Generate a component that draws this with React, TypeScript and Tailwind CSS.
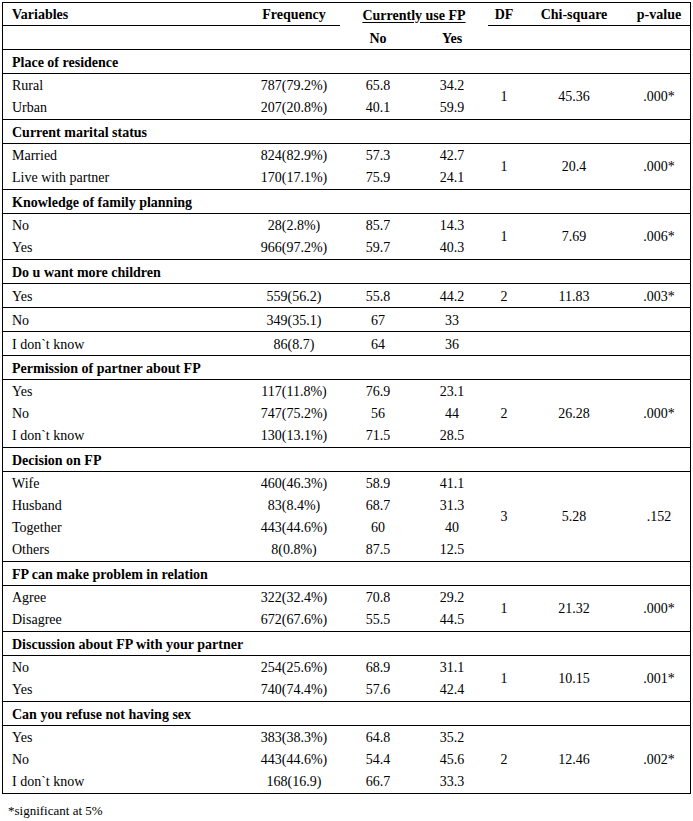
import React from "react";

type Section = {
  title: string;
  rows: [string, string, string, string][];
  stats: [string, string, string];
  split?: boolean;
};

const sections: Section[] = [
  {
    title: "Place of residence",
    rows: [
      ["Rural", "787(79.2%)", "65.8", "34.2"],
      ["Urban", "207(20.8%)", "40.1", "59.9"],
    ],
    stats: ["1", "45.36", ".000*"],
  },
  {
    title: "Current marital status",
    rows: [
      ["Married", "824(82.9%)", "57.3", "42.7"],
      ["Live with partner", "170(17.1%)", "75.9", "24.1"],
    ],
    stats: ["1", "20.4", ".000*"],
  },
  {
    title: "Knowledge of family planning",
    rows: [
      ["No", "28(2.8%)", "85.7", "14.3"],
      ["Yes", "966(97.2%)", "59.7", "40.3"],
    ],
    stats: ["1", "7.69", ".006*"],
  },
  {
    title: "Do u want more children",
    rows: [
      ["Yes", "559(56.2)", "55.8", "44.2"],
      ["No", "349(35.1)", "67", "33"],
      ["I don`t know", "86(8.7)", "64", "36"],
    ],
    stats: ["2", "11.83", ".003*"],
    split: true,
  },
  {
    title: "Permission of partner about FP",
    rows: [
      ["Yes", "117(11.8%)", "76.9", "23.1"],
      ["No", "747(75.2%)", "56", "44"],
      ["I don`t know", "130(13.1%)", "71.5", "28.5"],
    ],
    stats: ["2", "26.28", ".000*"],
  },
  {
    title: "Decision on FP",
    rows: [
      ["Wife", "460(46.3%)", "58.9", "41.1"],
      ["Husband", "83(8.4%)", "68.7", "31.3"],
      ["Together", "443(44.6%)", "60", "40"],
      ["Others", "8(0.8%)", "87.5", "12.5"],
    ],
    stats: ["3", "5.28", ".152"],
  },
  {
    title: "FP can make problem in relation",
    rows: [
      ["Agree", "322(32.4%)", "70.8", "29.2"],
      ["Disagree", "672(67.6%)", "55.5", "44.5"],
    ],
    stats: ["1", "21.32", ".000*"],
  },
  {
    title: "Discussion about FP with your partner",
    rows: [
      ["No", "254(25.6%)", "68.9", "31.1"],
      ["Yes", "740(74.4%)", "57.6", "42.4"],
    ],
    stats: ["1", "10.15", ".001*"],
  },
  {
    title: "Can you refuse not having sex",
    rows: [
      ["Yes", "383(38.3%)", "64.8", "35.2"],
      ["No", "443(44.6%)", "54.4", "45.6"],
      ["I don`t know", "168(16.9)", "66.7", "33.3"],
    ],
    stats: ["2", "12.46", ".002*"],
  },
];

function DataCells({ row }: { row: [string, string, string, string] }) {
  return (
    <>
      <div className="pl-[9px]">{row[0]}</div>
      <div className="text-center">{row[1]}</div>
      <div className="text-center">{row[2]}</div>
      <div className="text-center">{row[3]}</div>
    </>
  );
}

function Stats({ stats }: { stats: [string, string, string] }) {
  return (
    <div className="grid flex-1 grid-cols-[32px_108px_62px] items-center pt-[2px] text-center">
      <div>{stats[0]}</div>
      <div>{stats[1]}</div>
      <div>{stats[2]}</div>
    </div>
  );
}

function SectionBlock({ s }: { s: Section }) {
  return (
    <>
      <div className="flex h-[24px] items-center border-t border-black pl-[9px] pt-[2px] font-bold">
        {s.title}
      </div>
      {s.split ? (
        s.rows.map((r, i) => (
          <div key={i} className="flex h-[24px] items-center border-t border-black pt-[2px]">
            <div className="grid w-[485px] grid-cols-[245px_92px_76px_72px] items-center">
              <DataCells row={r} />
            </div>
            {i === 0 ? (
              <div className="grid flex-1 grid-cols-[32px_108px_62px] items-center text-center">
                <div>{s.stats[0]}</div>
                <div>{s.stats[1]}</div>
                <div>{s.stats[2]}</div>
              </div>
            ) : null}
          </div>
        ))
      ) : (
        <div className="flex border-t border-black pb-[1px]">
          <div className="flex w-[485px] flex-col">
            {s.rows.map((r, i) => (
              <div key={i} className="grid h-[22px] grid-cols-[245px_92px_76px_72px] items-center pt-[2px]">
                <DataCells row={r} />
              </div>
            ))}
          </div>
          <Stats stats={s.stats} />
        </div>
      )}
    </>
  );
}

export default function App() {
  return (
    <div className="min-h-[821px] w-[693px] bg-white pt-[2px] font-['Liberation_Serif','Times_New_Roman',serif] text-[14px] leading-[16px] text-black">
      <div className="ml-[2px] w-[689px] border border-black">
        <div className="grid h-[23px] grid-cols-[245px_92px_148px_32px_108px_62px] font-bold">
          <div className="flex items-center border-b border-black pl-[9px] pt-[2px]">Variables</div>
          <div className="flex items-center justify-center border-b border-black pt-[2px]">Frequency</div>
          <div className="flex items-center justify-center pt-[2px]">
            <span className="underline underline-offset-2">Currently use FP</span>
          </div>
          <div className="flex items-center justify-center border-b border-black pt-[2px]">DF</div>
          <div className="flex items-center justify-center border-b border-black pt-[2px]">Chi-square</div>
          <div className="flex items-center justify-center border-b border-black pt-[2px]">p-value</div>
        </div>
        <div className="grid h-[23px] grid-cols-[245px_92px_76px_72px_32px_108px_62px] items-center pt-[2px] font-bold">
          <div />
          <div />
          <div className="text-center">No</div>
          <div className="text-center">Yes</div>
          <div />
          <div />
          <div />
        </div>
        {sections.map((s) => (
          <SectionBlock key={s.title} s={s} />
        ))}
      </div>
      <p className="mt-[9px] pl-[8px] text-[13px]">*significant at 5%</p>
    </div>
  );
}
